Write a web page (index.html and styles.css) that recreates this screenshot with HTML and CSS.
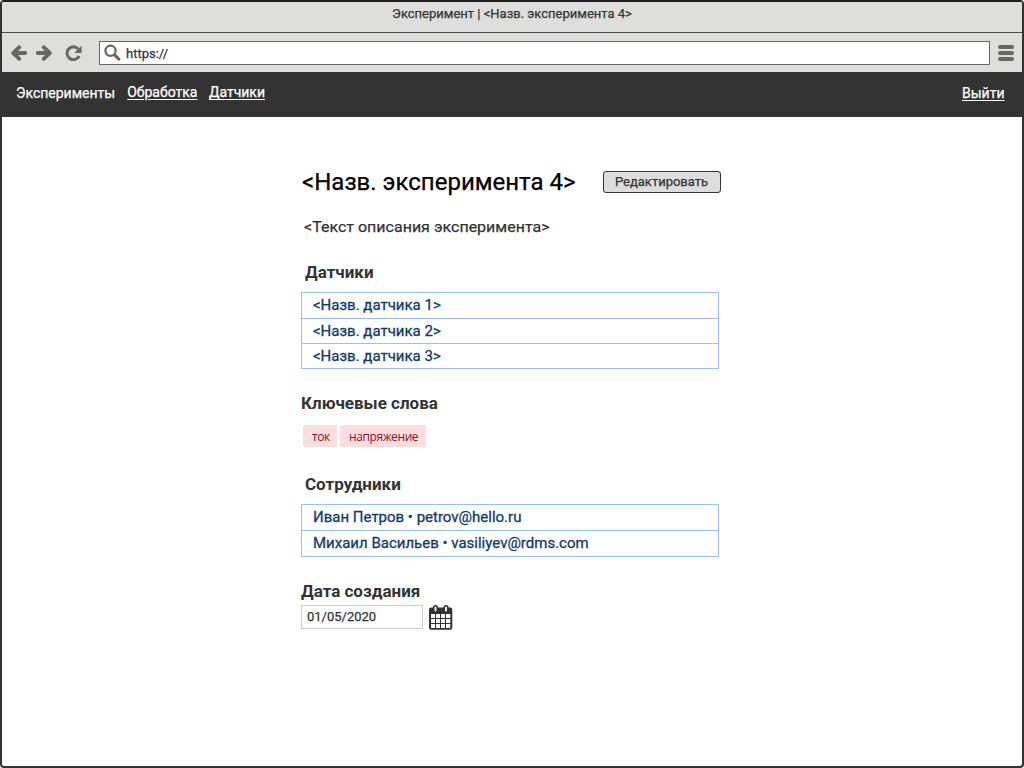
FILE: index.html
```html
<!DOCTYPE html>
<html lang="ru">
<head>
<meta charset="utf-8">
<title>Эксперимент</title>
<link rel="stylesheet" href="styles.css">
</head>
<body>
<div class="window">
  <div class="titlebar"><span class="window-title">Эксперимент | &lt;Назв. эксперимента 4&gt;</span></div>
  <div class="toolbar">
    <svg class="arrow" width="16" height="16" viewBox="0 0 16 16"><path d="M8.3 2.2 2.2 8l6.100 5.800M3 8h11.200"/></svg>
    <svg class="arrow forward" width="16" height="16" viewBox="0 0 16 16"><path d="M7.700 2.200 13.800 8l-6.100 5.800M13 8H1.800"/></svg>
    <svg class="reload" width="18" height="16" viewBox="0 0 18 16"><path class="ring" d="M13.2 4A6.4 6.4 0 1 0 14.2 11"/><path class="tip" d="M16.6.8V8H9.4z"/></svg>
    <div class="address">
      <svg class="search" width="17" height="17" viewBox="0 0 17 17"><circle cx="6.5" cy="6.8" r="5.1"/><path d="M10.8 11.1l4 4"/></svg>
      <span class="url">https://</span>
    </div>
    <svg class="menu" width="16" height="16" viewBox="0 0 16 16"><path d="M2 2h12M2 8h12M2 14h12"/></svg>
  </div>
  <nav class="nav">
    <span class="nav-item current">Эксперименты</span>
    <a class="nav-item processing">Обработка</a>
    <a class="nav-item sensors">Датчики</a>
    <a class="nav-item logout">Выйти</a>
  </nav>
  <main class="page">
    <header class="heading">
      <h1>&lt;Назв. эксперимента 4&gt;</h1>
      <button class="edit">Редактировать</button>
    </header>
    <p class="description">&lt;Текст описания эксперимента&gt;</p>
    <h2 class="inset sensors-title">Датчики</h2>
    <ul class="list sensor-list">
      <li>&lt;Назв. датчика 1&gt;</li>
      <li>&lt;Назв. датчика 2&gt;</li>
      <li>&lt;Назв. датчика 3&gt;</li>
    </ul>
    <h2 class="keywords-title">Ключевые слова</h2>
    <div class="tags"><span class="tag short">ток</span><span class="tag long">напряжение</span></div>
    <h2 class="inset staff-title">Сотрудники</h2>
    <ul class="list staff-list">
      <li>Иван Петров • petrov@hello.ru</li>
      <li>Михаил Васильев • vasiliyev@rdms.com</li>
    </ul>
    <h2 class="date-title">Дата создания</h2>
    <div class="date-row">
      <span class="date">01/05/2020</span>
      <svg class="calendar" width="24" height="25" viewBox="0 0 24 25">
        <rect x="0" y="2.500" width="23.300" height="22.300" rx="2" fill="#333"/>
        <path d="M2 9h4v4H2zm5 0h4v4H7zm5 0h4v4h-4zm5 0h4.300v4H17zM2 14h4v4H2zm5 0h4v4H7zm5 0h4v4h-4zm5 0h4.300v4H17zM2 19h4v4H2zm5 0h4v4H7zm5 0h4v4h-4zm5 0h4.300v4H17z" fill="#fff"/>
        <path d="M6.500 2.600v2.800M17 2.600v2.800" stroke="#333" stroke-width="5.200" stroke-linecap="round"/>
        <path d="M6.500 2.500v3M17 2.500v3" stroke="#fff" stroke-width="1.900" stroke-linecap="round"/>
      </svg>
    </div>
  </main>
</div>
</body>
</html>
```
FILE: styles.css
```css
* { box-sizing: border-box; }
body { margin: 0; background: #fff; font-family: Roboto, sans-serif; color: #333; }
.window { width: 1024px; height: 768px; border: 2px solid #333; border-top-color: #231f20; border-radius: 4px; overflow: hidden; background: #fff; }
.titlebar { height: 31px; background: #dededc; border-bottom: 1px solid #4a4a4a; text-align: center; font-size: 13px; line-height: 24px; }
.window-title, .url, .nav-item, .description, .list li, .edit, .date, h1 { -webkit-text-stroke: .25px currentColor; white-space: nowrap; }
.list li { -webkit-text-stroke-width: .3px; }
.toolbar { height: 39px; background: #dededc; display: flex; align-items: center; padding: 0 8px 0 9px; }
.arrow { fill: none; stroke: #666; stroke-width: 3.8; stroke-linecap: round; stroke-linejoin: round; }
.forward { margin-left: 9px; }
.reload { margin-left: 13px; }
.ring { fill: none; stroke: #666; stroke-width: 3; }
.tip { fill: #666; }
.address { margin-left: 16px; width: 891px; height: 24px; border: 1px solid #666; background: #fff; display: flex; align-items: center; padding-left: 4px; }
.search { fill: none; stroke: #666; stroke-width: 2.2; }
.search path { stroke-width: 3.2; stroke-linecap: round; }
.url { font-size: 13px; margin-left: 5px; padding-top: 2px; }
.menu { margin-left: auto; stroke: #666; stroke-width: 4; stroke-linecap: round; }
.nav { height: 45px; background: #333; color: #fff; display: flex; align-items: flex-start; padding: 11px 17.5px 0 14px; font-size: 14px; line-height: 18px; }
a.nav-item { text-decoration: underline; text-underline-offset: 2px; text-decoration-thickness: 1px; }
.current, .logout { padding-top: 1px; }
.processing { margin-left: 12px; }
.sensors { margin-left: 11.5px; }
.logout { margin-left: auto; }
.page { width: 420px; margin-left: 299px; padding-top: 49px; display: flex; flex-direction: column; align-items: flex-start; }
.heading { display: flex; align-items: center; justify-content: space-between; width: 420px; height: 32px; }
h1 { margin: 0 0 0 1px; font-size: 24px; font-weight: 400; color: #000; line-height: 32px; }
.edit { width: 118px; height: 22px; padding: 0 1px 0 0; border: 1px solid #333; border-radius: 3px; background: #ddd; color: #333; font: 13px/18px Roboto, sans-serif; }
.description { margin: 19px 0 0 3px; font-size: 15px; line-height: 20px; transform: scaleX(1.067); transform-origin: left; }
h2 { margin: 0; font-size: 17px; font-weight: 700; line-height: 20px; }
.inset { margin-left: 4px; }
.sensors-title { margin-top: 25px; }
.list { list-style: none; margin: 10px 0 0; padding: 0; width: 418px; border: 1px solid #99c0f5; font-size: 15px; color: #0f3c6c; }
.list li { height: 25px; line-height: 24px; padding-left: 11px; }
.list li + li { border-top: 1px solid #99c0f5; }
.sensor-list { height: 77px; }
.keywords-title { margin-top: 24px; }
.tags { display: flex; gap: 3px; margin: 12px 0 0 2px; font: 12px/24px "Open Sans", sans-serif; letter-spacing: -.4px; color: #85102f; }
.tag { height: 22px; background: #ffdcdf; border-radius: 3px 0 0 3px; padding-left: 9px; }
.short { width: 34px; }
.long { width: 86px; }
.staff-title { margin-top: 27px; }
.staff-list li + li { height: 26px; }
.date-title { margin-top: 24px; }
.date-row { display: flex; align-items: flex-start; margin-top: 4px; }
.date { width: 122px; height: 24px; border: 1px solid #ccc; padding-left: 5px; font-size: 13px; line-height: 22px; }
.calendar { margin-left: 6px; }
```
